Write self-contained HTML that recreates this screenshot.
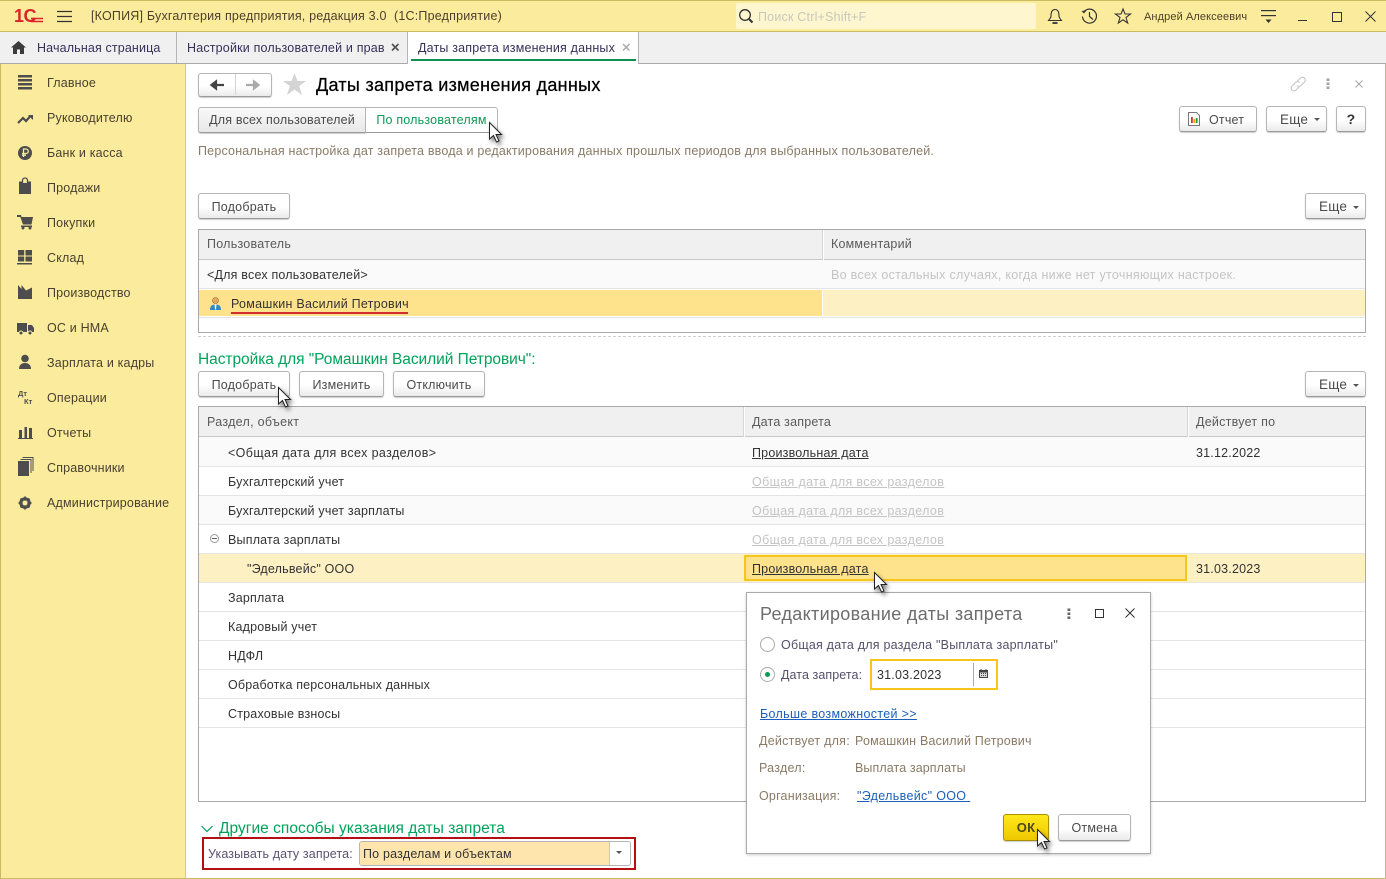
<!DOCTYPE html>
<html lang="ru"><head><meta charset="utf-8"><title>Даты запрета изменения данных</title>
<style>
html,body{margin:0;padding:0;width:1386px;height:879px;overflow:hidden;background:#fff}
body{position:relative;font-family:"Liberation Sans",Arial,sans-serif;font-size:12.5px;color:#333}
.t{position:absolute;white-space:nowrap;line-height:16px;height:16px;letter-spacing:.2px}
.b{position:absolute}
.btn{position:absolute;box-sizing:border-box;height:26px;border:1px solid #b5b5b5;border-bottom-color:#9a9a9a;border-radius:3px;background:linear-gradient(#fff 0,#fff 55%,#eaeaea 100%);box-shadow:0 1px 1px #ccc;text-align:center;line-height:26px;color:#4b4b4b;white-space:nowrap;letter-spacing:.2px}
svg{position:absolute;overflow:visible}
.s{color:#4a4030;letter-spacing:.18px}
.l{position:absolute;height:1px;background:#e4e4e4}
.hd{color:#5a5a5a;letter-spacing:.25px}
.gl{color:#c4c4c4;text-decoration:underline;letter-spacing:.35px}
.ul{text-decoration:underline;color:#333}
.gr{color:#8a7a66;letter-spacing:.25px}
.blue{color:#1d5fb8;text-decoration:underline;letter-spacing:.33px}
</style></head><body>

<!-- title bar -->
<div class="b" style="left:0;top:0;width:1386px;height:32px;background:#fbec9d;border-top:1px solid #c9ba63;box-sizing:border-box;border-bottom:1px solid #c9ba63"></div>
<div class="b" style="left:14px;top:6px;font:bold 18px/20px 'Liberation Sans',sans-serif;color:#d8242a;letter-spacing:-.5px">1С</div>
<svg style="left:0;top:0" width="60" height="32"><path d="M31 18.500H43M31 21.500H43" stroke="#d8242a" stroke-width="1.400" fill="none"/></svg>
<svg style="left:57px;top:11px" width="15" height="12"><path d="M0 .5H15M0 5.500H15M0 10.500H15" stroke="#333" stroke-width="1.200"/></svg>
<div class="t" style="left:91px;top:8px;color:#4c3f2a">[КОПИЯ] Бухгалтерия предприятия, редакция 3.0&nbsp; (1С:Предприятие)</div>
<div class="b" style="left:736px;top:3px;width:300px;height:26px;background:#fdf6cf;border-radius:2px"></div>
<svg style="left:738px;top:8px" width="16" height="16"><circle cx="7" cy="7" r="5.300" fill="none" stroke="#333" stroke-width="1.300"/><path d="M11 11L14.500 14.500" stroke="#333" stroke-width="2"/></svg>
<div class="t" style="left:758px;top:9px;color:#c9c7bc">Поиск Ctrl+Shift+F</div>
<svg style="left:1047px;top:8px" width="16" height="17" fill="none" stroke="#333" stroke-width="1.100"><path d="M8 1.500C4.500 1.500 4 5 4 8C4 10 2.500 11 1.500 12.500H14.500C13.500 11 12 10 12 8C12 5 11.500 1.500 8 1.500Z"/><path d="M5.500 15H10.500" stroke-width="1.800"/></svg>
<svg style="left:1081px;top:8px" width="17" height="17" fill="none" stroke="#333" stroke-width="1.200"><path d="M2.500 4.500A7 7 0 1 1 1.500 8.500"/><path d="M0.500 3L3 5.500L5.500 2.500" fill="#333" stroke="none"/><path d="M8.500 4V8.500L12 11.500"/></svg>
<svg style="left:1115px;top:8px" width="16" height="16" fill="none" stroke="#333" stroke-width="1.100"><path d="M8 1L10 6H15.500L11 9.500L12.700 15L8 11.800L3.300 15L5 9.500L.5 6H6Z"/></svg>
<div class="t" style="left:1144px;top:9px;font-size:11px;color:#4c3f2a;letter-spacing:.1px">Андрей Алексеевич</div>
<svg style="left:1261px;top:10px" width="16" height="15" fill="#333"><rect width="15" height="1.200"/><rect y="5" width="15" height="1.200"/><path d="M4.500 9.500H10.500L7.500 13Z"/></svg>
<div class="b" style="left:1298px;top:20px;width:9px;height:1px;background:#333"></div>
<div class="b" style="left:1332px;top:12px;width:8px;height:8px;border:1px solid #333"></div>
<svg style="left:1365px;top:11px" width="12" height="12"><path d="M.5 .5L10.500 10.500M10.500 .5L.5 10.500" stroke="#333" stroke-width="1"/></svg>

<!-- tabs -->
<div class="b" style="left:0;top:32px;width:1386px;height:32px;background:#f0f0f0;border-bottom:1px solid #a9a9a9;box-sizing:border-box"></div>
<div class="b" style="left:176px;top:32px;width:1px;height:31px;background:#b5b5b5"></div>
<div class="b" style="left:407px;top:32px;width:232px;height:32px;background:#fff;border-left:1px solid #b5b5b5;border-right:1px solid #b5b5b5;box-sizing:border-box"></div>
<div class="b" style="left:411px;top:59px;width:225px;height:2px;background:#0e8f50"></div>
<svg style="left:11px;top:41px" width="15" height="13" fill="#3c3c3c"><path d="M7.500 0L15 6.500H13V13H9V8.500H6V13H2V6.500H0Z"/></svg>
<div class="t" style="left:37px;top:40px;color:#37315a;letter-spacing:.14px">Начальная страница</div>
<div class="t" style="left:187px;top:40px;color:#37315a;letter-spacing:.18px">Настройки пользователей и прав</div>
<svg style="left:391px;top:43px" width="9" height="9"><path d="M1 1L7.500 7.500M7.500 1L1 7.500" stroke="#555" stroke-width="1.700"/></svg>
<div class="t" style="left:418px;top:40px;color:#37315a;letter-spacing:.18px">Даты запрета изменения данных</div>
<svg style="left:622px;top:43px" width="9" height="9"><path d="M1 1L7.500 7.500M7.500 1L1 7.500" stroke="#aaa" stroke-width="1.500"/></svg>

<!-- sidebar -->
<div class="b" style="left:0;top:64px;width:186px;height:815px;background:#fbec9d;border-left:1px solid #c9ba63;border-right:1px solid #d9cc80;box-sizing:border-box"></div>
<div class="b" style="left:1385px;top:64px;width:1px;height:815px;background:#c9ba63"></div>
<div class="b" style="left:0;top:878px;width:1386px;height:1px;background:#c9ba63"></div>
<div class="t s" style="left:47px;top:75px">Главное</div>
<div class="t s" style="left:47px;top:110px">Руководителю</div>
<div class="t s" style="left:47px;top:145px">Банк и касса</div>
<div class="t s" style="left:47px;top:180px">Продажи</div>
<div class="t s" style="left:47px;top:215px">Покупки</div>
<div class="t s" style="left:47px;top:250px">Склад</div>
<div class="t s" style="left:47px;top:285px">Производство</div>
<div class="t s" style="left:47px;top:320px">ОС и НМА</div>
<div class="t s" style="left:47px;top:355px">Зарплата и кадры</div>
<div class="t s" style="left:47px;top:390px">Операции</div>
<div class="t s" style="left:47px;top:425px">Отчеты</div>
<div class="t s" style="left:47px;top:460px">Справочники</div>
<div class="t s" style="left:47px;top:495px">Администрирование</div>
<svg style="left:0;top:0" width="40" height="520" fill="#4d4d4d">
<path d="M18 75h14v2.500H18zM18 79h14v2.500H18zM18 83h14v2.500H18zM18 87h14v2.500H18z"/>
<path d="M18 123L23 118L26 121L30 116.500" fill="none" stroke="#4d4d4d" stroke-width="2.200"/><path d="M28 115h5v5z"/>
<circle cx="25" cy="153" r="7"/><path d="M23.500 157V149h2.500a2.200 2.200 0 0 1 0 4.500H22M22 155.200h4" fill="none" stroke="#fbec9d" stroke-width="1.300"/>
<path d="M19 181.500h3.500V183h5v-1.500H31V194H19z"/><path d="M22.500 183V180.500a2.500 2.500 0 0 1 5 0V183" fill="none" stroke="#4d4d4d" stroke-width="1.300"/>
<path d="M17 215h4l.6 2H33l-1.500 7.500H23L20.300 217H17z"/><path d="M21 225.500h11v1.500H21z"/><circle cx="23" cy="228" r="1.500"/><circle cx="30" cy="228" r="1.500"/>
<path d="M18 250h6.200v5.500H18zM25.500 250H32v5.500h-6.500zM18 256.500h6.200v5H18zM25.500 256.500H32v5h-6.500zM17 263h15v1.500H17z"/>
<path d="M18 299v-14l3.500 4v-4l4.500 5.500 6-3V299z"/>
<path d="M17 323h10v9H17zM28 325h4l2 3v4h-6z"/><circle cx="21" cy="333" r="2" stroke="#fbec9d"/><circle cx="30" cy="333" r="2" stroke="#fbec9d"/>
<circle cx="25" cy="358.500" r="3.800"/><path d="M19 369c0-4.500 3-6 6-6s6 1.500 6 6z"/>
<path d="M19 430h3v8h-3zM24.500 427h2.500v11h-2.500zM29 428h3v10h-3zM18 438h15v1H18z"/>
<path d="M18 461h11v15H18z"/><path d="M20.500 459.500H31V473M22.500 457.500H33V471" fill="none" stroke="#4d4d4d" stroke-width="1"/>
<circle cx="25" cy="503" r="4.500" fill="none" stroke="#4d4d4d" stroke-width="2.600"/><path d="M25 496.500v13M18.500 503h13M20.500 498.500l9 9M29.500 498.500l-9 9" stroke="#4d4d4d" stroke-width="1.800"/><circle cx="25" cy="503" r="2.400" fill="#fbec9d"/>
</svg>
<div class="b" style="left:18px;top:390px;font:bold 7.500px/7px 'Liberation Sans',sans-serif;color:#4d4d4d">Дт</div>
<div class="b" style="left:24px;top:398px;font:bold 7.500px/7px 'Liberation Sans',sans-serif;color:#4d4d4d">Кт</div>

<!-- header -->
<div class="btn" style="left:198px;top:73px;width:74px;height:24px"></div>
<div class="b" style="left:235px;top:74px;width:1px;height:21px;background:#d5d5d5"></div>
<svg style="left:210px;top:80px" width="60" height="10"><path d="M14 5H5M6 1.500L1.500 5L6 8.500Z" stroke="#444" stroke-width="2.200" fill="#444"/><path d="M36 5H45M44 1.500L48.500 5L44 8.500Z" stroke="#aaa" stroke-width="2.200" fill="#aaa"/></svg>
<svg style="left:283px;top:73px" width="23" height="22"><path d="M11.500 0L14.500 8H23L16.200 13L19 22L11.500 16.500L4 22L6.800 13L0 8H8.500Z" fill="#d4d4d4"/></svg>
<div class="t" style="left:316px;top:75px;font-size:18px;line-height:20px;height:20px;color:#000;letter-spacing:.29px;-webkit-text-stroke:.25px #000">Даты запрета изменения данных</div>
<svg style="left:1290px;top:76px" width="17" height="16" fill="none" stroke="#c9c9c9" stroke-width="1.200"><path d="M7 5.500L10.500 2a2.800 2.800 0 0 1 4 4L11 9.500a2.800 2.800 0 0 1-4 0M9.500 10.500L6 14a2.800 2.800 0 0 1-4-4L5.500 6.500a2.800 2.800 0 0 1 4 0"/></svg>
<svg style="left:1326px;top:78px" width="4" height="12" fill="#a5a5a5"><rect x=".5" y=".5" width="3" height="2.500"/><rect x=".5" y="4.500" width="3" height="2.500"/><rect x=".5" y="8.500" width="3" height="2.500"/></svg>
<svg style="left:1355px;top:80px" width="8" height="8"><path d="M.5 .5L7.500 7.500M7.500 .5L.5 7.500" stroke="#a5a5a5" stroke-width="1"/></svg>

<!-- mode switch -->
<div class="btn" style="left:198px;top:107px;width:168px;line-height:24px;background:linear-gradient(#f9f9f9,#e8e8e8);border-radius:3px 0 0 3px">Для всех пользователей</div>
<div class="btn" style="left:365px;top:107px;width:133px;line-height:24px;background:#fff;color:#0b9a55;border-radius:0 3px 3px 0;box-shadow:none">По пользователям</div>
<div class="btn" style="left:1179px;top:106px;width:78px;text-align:left;padding-left:29px">Отчет</div>
<svg style="left:1188px;top:112px" width="12" height="14"><path d="M.5 .5H8.500L11.500 3.500V13.500H.5Z" fill="#fff" stroke="#777"/><rect x="3" y="5" width="1.800" height="6" fill="#c33"/><rect x="5.400" y="7" width="1.800" height="4" fill="#e8a020"/><rect x="7.800" y="6" width="1.800" height="5" fill="#2a9a3a"/></svg>
<div class="btn" style="left:1266px;top:106px;width:61px;text-align:left;padding-left:13px;font-size:13.500px;line-height:25px">Еще</div>
<svg style="left:1314px;top:118px" width="6" height="4"><path d="M0 0H6L3 3Z" fill="#555"/></svg>
<div class="btn" style="left:1336px;top:106px;width:30px;font-weight:bold;font-size:14px;line-height:25px;color:#333">?</div>
<div class="t" style="left:198px;top:143px;color:#8a7a66;letter-spacing:.195px">Персональная настройка дат запрета ввода и редактирования данных прошлых периодов для выбранных пользователей.</div>

<div class="btn" style="left:198px;top:193px;width:92px">Подобрать</div>
<div class="btn" style="left:1305px;top:193px;width:61px;text-align:left;padding-left:13px;font-size:13.500px;line-height:25px">Еще</div>
<svg style="left:1353px;top:206px" width="6" height="4"><path d="M0 0H6L3 3Z" fill="#555"/></svg>

<!-- users table -->
<div class="b" style="left:198px;top:229px;width:1168px;height:104px;border:1px solid #a9a9a9;box-sizing:border-box;background:#fff"></div>
<div class="b" style="left:199px;top:230px;width:1166px;height:29px;background:#f0f0f0;border-bottom:1px solid #c8c8c8"></div>
<div class="b" style="left:822px;top:230px;width:1px;height:30px;background:#d5d5d5"></div>
<div class="b" style="left:823px;top:230px;width:1px;height:30px;background:#fff"></div>
<div class="b" style="left:199px;top:260px;width:1166px;height:28px;background:#fafafa"></div>
<div class="l" style="left:199px;top:288px;width:1166px"></div>
<div class="b" style="left:199px;top:290px;width:623px;height:26px;background:#fee28c"></div>
<div class="b" style="left:823px;top:290px;width:542px;height:26px;background:#fdf0c3"></div>
<div class="l" style="left:199px;top:317px;width:1166px"></div>
<div class="t hd" style="left:207px;top:236px">Пользователь</div>
<div class="t hd" style="left:831px;top:236px;letter-spacing:.2px">Комментарий</div>
<div class="t" style="left:207px;top:267px">&lt;Для всех пользователей&gt;</div>
<div class="t" style="left:831px;top:267px;color:#c4c4c4;letter-spacing:.3px">Во всех остальных случаях, когда ниже нет уточняющих настроек.</div>
<svg style="left:210px;top:297px" width="11" height="13"><circle cx="5.500" cy="3.500" r="3" fill="#e3a860" stroke="#a06a30" stroke-width=".6"/><path d="M0 13c0-4.500 2.500-5.500 5.500-5.500S11 8.500 11 13z" fill="#2f86c9"/><path d="M4.500 7.500h2l-.5 5h-1z" fill="#fff"/></svg>
<div class="t" style="left:231px;top:296px;letter-spacing:.25px">Ромашкин Василий Петрович</div>
<div class="b" style="left:231px;top:312px;width:177px;height:2px;background:#d22b2b"></div>
<div class="b" style="left:198px;top:336px;width:1168px;height:0;border-top:1px dashed #cfcfcf"></div>

<div class="t" style="left:198px;top:351px;font-size:15.500px;line-height:18px;height:18px;color:#00a35a;letter-spacing:-.05px">Настройка для "Ромашкин Василий Петрович":</div>
<div class="btn" style="left:198px;top:371px;width:92px">Подобрать</div>
<div class="btn" style="left:299px;top:371px;width:85px">Изменить</div>
<div class="btn" style="left:393px;top:371px;width:92px">Отключить</div>
<div class="btn" style="left:1305px;top:371px;width:61px;text-align:left;padding-left:13px;font-size:13.500px;line-height:25px">Еще</div>
<svg style="left:1353px;top:384px" width="6" height="4"><path d="M0 0H6L3 3Z" fill="#555"/></svg>

<!-- main table -->
<div class="b" style="left:198px;top:406px;width:1168px;height:396px;border:1px solid #a9a9a9;box-sizing:border-box;background:#fff"></div>
<div class="b" style="left:199px;top:407px;width:1166px;height:29px;background:#f0f0f0;border-bottom:1px solid #c8c8c8"></div>
<div class="b" style="left:743px;top:407px;width:1px;height:30px;background:#d5d5d5"></div>
<div class="b" style="left:744px;top:407px;width:1px;height:30px;background:#fff"></div>
<div class="b" style="left:1187px;top:407px;width:1px;height:30px;background:#d5d5d5"></div>
<div class="b" style="left:1188px;top:407px;width:1px;height:30px;background:#fff"></div>
<div class="b" style="left:199px;top:437px;width:1166px;height:29px;background:#fafafa"></div>
<div class="b" style="left:199px;top:496px;width:1166px;height:28px;background:#fafafa"></div>
<div class="l" style="left:199px;top:466px;width:1166px"></div>
<div class="l" style="left:199px;top:495px;width:1166px"></div>
<div class="l" style="left:199px;top:524px;width:1166px"></div>
<div class="l" style="left:199px;top:553px;width:1166px"></div>
<div class="b" style="left:199px;top:554px;width:1166px;height:28px;background:#fdf0c3"></div>
<div class="l" style="left:199px;top:582px;width:1166px"></div>
<div class="l" style="left:199px;top:611px;width:1166px"></div>
<div class="l" style="left:199px;top:640px;width:1166px"></div>
<div class="l" style="left:199px;top:669px;width:1166px"></div>
<div class="l" style="left:199px;top:698px;width:1166px"></div>
<div class="l" style="left:199px;top:727px;width:1166px"></div>
<div class="b" style="left:744px;top:555px;width:443px;height:26px;background:#fee28c;border:2px solid #f8c51c;box-sizing:border-box"></div>
<div class="t hd" style="left:207px;top:414px;letter-spacing:.3px">Раздел, объект</div>
<div class="t hd" style="left:752px;top:414px;letter-spacing:.2px">Дата запрета</div>
<div class="t hd" style="left:1196px;top:414px">Действует по</div>
<div class="t" style="left:228px;top:445px;letter-spacing:.38px">&lt;Общая дата для всех разделов&gt;</div>
<div class="t" style="left:228px;top:474px">Бухгалтерский учет</div>
<div class="t" style="left:228px;top:503px">Бухгалтерский учет зарплаты</div>
<div class="t" style="left:228px;top:532px">Выплата зарплаты</div>
<svg style="left:210px;top:534px" width="9" height="9"><circle cx="4.500" cy="4.500" r="4" fill="none" stroke="#999"/><path d="M2 4.500H7" stroke="#666"/></svg>
<div class="t" style="left:247px;top:561px">"Эдельвейс" ООО</div>
<div class="t" style="left:228px;top:590px">Зарплата</div>
<div class="t" style="left:228px;top:619px">Кадровый учет</div>
<div class="t" style="left:228px;top:648px">НДФЛ</div>
<div class="t" style="left:228px;top:677px;letter-spacing:.17px">Обработка персональных данных</div>
<div class="t" style="left:228px;top:706px">Страховые взносы</div>
<div class="t ul" style="left:752px;top:445px">Произвольная дата</div>
<div class="t gl" style="left:752px;top:474px">Общая дата для всех разделов</div>
<div class="t gl" style="left:752px;top:503px">Общая дата для всех разделов</div>
<div class="t gl" style="left:752px;top:532px">Общая дата для всех разделов</div>
<div class="t ul" style="left:752px;top:561px">Произвольная дата</div>
<div class="t" style="left:1196px;top:445px">31.12.2022</div>
<div class="t" style="left:1196px;top:561px">31.03.2023</div>

<!-- bottom -->
<svg style="left:201px;top:825px" width="12" height="8"><path d="M.5 1L6 6.500L11.500 1" fill="none" stroke="#00a35a" stroke-width="1.200"/></svg>
<div class="t" style="left:219px;top:820px;font-size:15.500px;line-height:18px;height:18px;color:#00a35a;letter-spacing:.03px">Другие способы указания даты запрета</div>
<div class="b" style="left:202px;top:837px;width:434px;height:33px;border:2px solid #b50f14;box-sizing:border-box"></div>
<div class="t" style="left:208px;top:846px;color:#5b5270;letter-spacing:.12px">Указывать дату запрета:</div>
<div class="b" style="left:359px;top:841px;width:272px;height:25px;border:1px solid #b5b5b5;border-radius:3px;box-sizing:border-box;background:#fff"></div>
<div class="b" style="left:360px;top:842px;width:249px;height:23px;background:#fee5ae;border-radius:2px 0 0 2px;border-right:1px solid #c8c8c8"></div>
<div class="t" style="left:363px;top:846px">По разделам и объектам</div>
<svg style="left:616px;top:851px" width="6" height="4"><path d="M0 0H6L3 3Z" fill="#555"/></svg>

<!-- dialog -->
<div class="b" style="left:746px;top:592px;width:405px;height:262px;background:#fff;border:1px solid #a9a9a9;box-sizing:border-box;box-shadow:0 1px 3px rgba(0,0,0,.2)"></div>
<div class="t" style="left:760px;top:603px;font-size:18px;line-height:22px;height:22px;color:#6d6d6d;letter-spacing:.32px">Редактирование даты запрета</div>
<svg style="left:1067px;top:608px" width="4" height="12" fill="#666"><rect x=".5" y=".5" width="2.800" height="2.500"/><rect x=".5" y="4.500" width="2.800" height="2.500"/><rect x=".5" y="8.500" width="2.800" height="2.500"/></svg>
<div class="b" style="left:1095px;top:609px;width:7px;height:7px;border:1.300px solid #333"></div>
<svg style="left:1125px;top:608px" width="10" height="10"><path d="M.5 .5L9.500 9.500M9.500 .5L.5 9.500" stroke="#333" stroke-width="1"/></svg>
<svg style="left:760px;top:637px" width="16" height="46"><circle cx="7.500" cy="7.500" r="7" fill="#fff" stroke="#aaa"/><circle cx="7.500" cy="37.500" r="7" fill="#fff" stroke="#aaa"/><circle cx="7.500" cy="37.500" r="2.500" fill="#0b9a55"/></svg>
<div class="t" style="left:781px;top:637px;color:#55506a;letter-spacing:.22px">Общая дата для раздела "Выплата зарплаты"</div>
<div class="t" style="left:781px;top:667px;color:#55506a;letter-spacing:.08px">Дата запрета:</div>
<div class="b" style="left:870px;top:659px;width:128px;height:31px;border:2px solid #f8c51c;box-sizing:border-box;background:#fff"></div>
<div class="b" style="left:973px;top:663px;width:1px;height:23px;background:#aaa"></div>
<div class="t" style="left:877px;top:667px">31.03.2023</div>
<svg style="left:979px;top:669px" width="9" height="9"><rect x="0" y="1" width="9" height="8" fill="#444"/><path d="M1 3.500H8V8H1Z" fill="#ddd"/><path d="M2 0V2M7 0V2" stroke="#444"/><path d="M2 4.500h5M2 6.500h5" stroke="#444" stroke-dasharray="1 1"/></svg>
<div class="t blue" style="left:760px;top:706px">Больше возможностей &gt;&gt;</div>
<div class="t gr" style="left:759px;top:733px">Действует для:</div>
<div class="t gr" style="left:855px;top:733px;letter-spacing:.2px">Ромашкин Василий Петрович</div>
<div class="t gr" style="left:759px;top:760px">Раздел:</div>
<div class="t gr" style="left:855px;top:760px;letter-spacing:.1px">Выплата зарплаты</div>
<div class="t gr" style="left:759px;top:788px;letter-spacing:.2px">Организация:</div>
<div class="t blue" style="left:857px;top:788px">"Эдельвейс" ООО&nbsp;</div>
<div class="btn" style="left:1003px;top:814px;width:46px;height:27px;background:linear-gradient(#ffe81a,#eec800);border-color:#a89000;font-weight:bold;color:#4a4a1e;font-size:13px;line-height:26px">ОК</div>
<div class="btn" style="left:1058px;top:814px;width:73px;height:27px;line-height:26px">Отмена</div>

<!-- cursors -->
<svg style="left:489px;top:122px;filter:drop-shadow(2px 3px 2px rgba(0,0,0,.5))" width="14" height="22"><path d="M.5 .5V17L4.500 13.500L7.500 20L10 19L7 12.500H12.500Z" fill="#fff" stroke="#222" stroke-width="1"/></svg>
<svg style="left:278px;top:387px;filter:drop-shadow(2px 3px 2px rgba(0,0,0,.5))" width="14" height="22"><path d="M.5 .5V17L4.500 13.500L7.500 20L10 19L7 12.500H12.500Z" fill="#fff" stroke="#222" stroke-width="1"/></svg>
<svg style="left:874px;top:572px;filter:drop-shadow(2px 3px 2px rgba(0,0,0,.5))" width="14" height="22"><path d="M.5 .5V17L4.500 13.500L7.500 20L10 19L7 12.500H12.500Z" fill="#fff" stroke="#222" stroke-width="1"/></svg>
<svg style="left:1037px;top:829px;filter:drop-shadow(2px 3px 2px rgba(0,0,0,.5))" width="14" height="22"><path d="M.5 .5V17L4.500 13.500L7.500 20L10 19L7 12.500H12.500Z" fill="#fff" stroke="#222" stroke-width="1"/></svg>
</body></html>
